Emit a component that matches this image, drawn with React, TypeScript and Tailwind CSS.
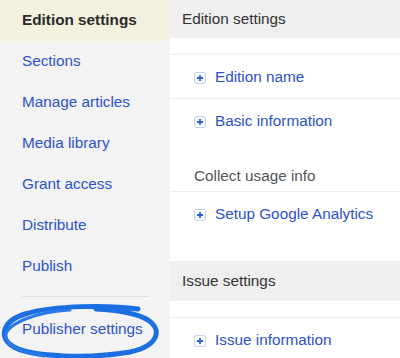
import React from "react";

const navItems = [
  "Sections",
  "Manage articles",
  "Media library",
  "Grant access",
  "Distribute",
  "Publish",
];

const PlusBox = () => (
  <span className="flex h-[12px] w-[12px] shrink-0 items-center justify-center rounded-[2px] border border-[#c9d5ee] bg-[#f7f9fe]">
    <svg width="8" height="8" viewBox="0 0 8 8">
      <path d="M4 1v6M1 4h6" stroke="#2b63d9" strokeWidth="1.8" />
    </svg>
  </span>
);

const Row = ({ label }: { label: string }) => (
  <div className="flex h-[43px] items-center gap-[9px] pl-[24px] pt-[2px] text-[#2d52c9]">
    <PlusBox />
    <span>{label}</span>
  </div>
);

// hand-drawn marker circle round "Publisher settings"
const Circle = () => (
  <svg
    className="pointer-events-none absolute left-0 top-[299px]"
    width="170"
    height="60"
    viewBox="0 0 170 60"
  >
    <path
      d="M138 10 C110 6 55 6 25 15 C2 22 -2 39 14 48 C32 58 90 60 130 53 C158 47 163 31 148 21 C136 14 118 11 96 10"
      fill="none"
      stroke="#1c6ee3"
      strokeWidth="5"
      strokeLinecap="round"
    />
    <path
      d="M70 11 C38 13 10 23 6 35 C4 45 18 53 44 57"
      fill="none"
      stroke="#2a7be8"
      strokeWidth="3"
      strokeLinecap="round"
    />
  </svg>
);

export default function App() {
  return (
    <div className="relative flex h-[358px] w-[400px] overflow-hidden bg-white font-['Liberation_Sans',Arial,sans-serif] text-[15.3px]">
      <aside className="w-[170px] shrink-0 bg-[#f3f3f3]">
        <div className="flex h-[41px] items-center bg-[#f2f0df] px-[22px] font-bold text-[#2b2b2b]">
          Edition settings
        </div>
        {navItems.map((item) => (
          <div key={item} className="flex h-[41px] items-center px-[22px] text-[#2d52c9]">
            {item}
          </div>
        ))}
        <div className="mx-[22px] mt-[9px] border-t border-[#e0e0e0]" />
        <div className="flex h-[64px] items-center px-[22px] text-[#2d52c9]">
          Publisher settings
        </div>
      </aside>

      <main className="flex-1">
        <div className="flex h-[38px] items-center bg-[#efefef] px-[12px] text-[#333]">
          Edition settings
        </div>
        <div className="h-[17px] border-b border-[#ececec]" />
        <div className="border-b border-[#ececec]">
          <Row label="Edition name" />
        </div>
        <Row label="Basic information" />
        <div className="flex h-[50px] items-end border-b border-[#ececec] pb-[3px] pl-[24px] text-[#555]">
          Collect usage info
        </div>
        <Row label="Setup Google Analytics" />
        <div className="h-[26px]" />
        <div className="flex h-[40px] items-center bg-[#efefef] px-[12px] text-[#333]">
          Issue settings
        </div>
        <div className="h-[17px] border-b border-[#ececec]" />
        <Row label="Issue information" />
      </main>

      <Circle />
    </div>
  );
}
